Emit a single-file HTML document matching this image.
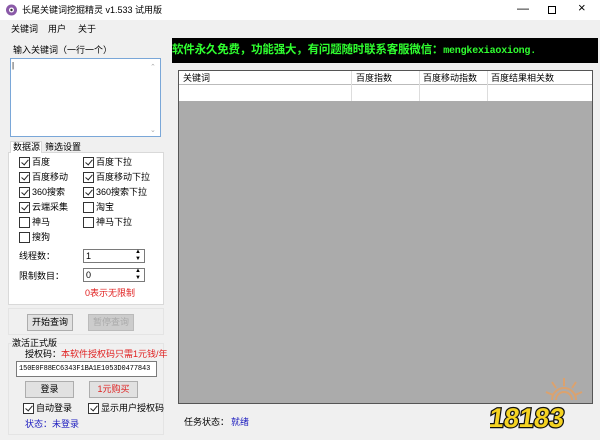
<!DOCTYPE html>
<html><head><meta charset="utf-8"><style>
*{margin:0;padding:0;box-sizing:border-box}
body{width:600px;height:440px;overflow:hidden;background:#f0f0f0;font-family:"Liberation Sans","Noto Sans CJK SC",sans-serif;font-size:9px;color:#000;position:relative}
.a{position:absolute;white-space:nowrap;line-height:11px}
.cb{position:absolute;width:11px;height:11px;border:1px solid #333;background:#fff}
.cb.c::after{content:"";position:absolute;left:3px;top:0px;width:3px;height:6px;border:solid #222;border-width:0 1px 1px 0;transform:rotate(40deg)}
.btn{position:absolute;border:1px solid #adadad;background:#e1e1e1;text-align:center;line-height:14px}
.inp{position:absolute;background:#fff;border:1px solid #7a7a7a}
</style></head><body>
<div style="position:absolute;left:0;top:0;width:600px;height:20px;background:#fff"></div>
<svg style="position:absolute;left:5px;top:3px" width="13" height="13"><circle cx="6.5" cy="7" r="5.5" fill="#8a5aa8"/><circle cx="6.5" cy="7" r="2.5" fill="#fff"/><circle cx="6.5" cy="7" r="1.2" fill="#333"/></svg>
<div class="a" style="left:22px;top:5px;font-size:9px">长尾关键词挖掘精灵 v1.533 试用版</div>
<div class="a" style="left:517px;top:3px;font-size:12px">—</div>
<div style="position:absolute;left:548px;top:6px;width:8px;height:8px;border:1px solid #000"></div>
<div class="a" style="left:578px;top:2px;font-size:13px">×</div>
<div class="a" style="left:11px;top:24px">关键词</div>
<div class="a" style="left:48px;top:24px">用户</div>
<div class="a" style="left:78px;top:24px">关于</div>

<div class="a" style="left:13px;top:45px">输入关键词（一行一个）</div>
<div style="position:absolute;left:10px;top:58px;width:151px;height:79px;border:1px solid #7aa7d8;background:#fff"></div>
<div class="a" style="left:12px;top:60px;font-size:8px">|</div>
<div class="a" style="left:150px;top:62px;color:#aaa;font-size:7px">⌃</div>
<div class="a" style="left:150px;top:125px;color:#aaa;font-size:7px">⌄</div>

<div style="position:absolute;left:8px;top:152px;width:156px;height:153px;border:1px solid #d9d9d9;background:#fff"></div>
<div style="position:absolute;left:10px;top:141px;width:32px;height:12px;background:#fff;border:1px solid #d9d9d9;border-bottom:none"></div>
<div class="a" style="left:13px;top:142px">数据源</div>
<div class="a" style="left:45px;top:142px">筛选设置</div>

<div class="cb c" style="left:19px;top:157px"></div><div class="a" style="left:32px;top:157px">百度</div>
<div class="cb c" style="left:83px;top:157px"></div><div class="a" style="left:96px;top:157px">百度下拉</div>
<div class="cb c" style="left:19px;top:172px"></div><div class="a" style="left:32px;top:172px">百度移动</div>
<div class="cb c" style="left:83px;top:172px"></div><div class="a" style="left:96px;top:172px">百度移动下拉</div>
<div class="cb c" style="left:19px;top:187px"></div><div class="a" style="left:32px;top:187px">360搜索</div>
<div class="cb c" style="left:83px;top:187px"></div><div class="a" style="left:96px;top:187px">360搜索下拉</div>
<div class="cb c" style="left:19px;top:202px"></div><div class="a" style="left:32px;top:202px">云端采集</div>
<div class="cb" style="left:83px;top:202px"></div><div class="a" style="left:96px;top:202px">淘宝</div>
<div class="cb" style="left:19px;top:217px"></div><div class="a" style="left:32px;top:217px">神马</div>
<div class="cb" style="left:83px;top:217px"></div><div class="a" style="left:96px;top:217px">神马下拉</div>
<div class="cb" style="left:19px;top:232px"></div><div class="a" style="left:32px;top:232px">搜狗</div>

<div class="a" style="left:19px;top:251px">线程数：</div>
<div class="inp" style="left:83px;top:249px;width:62px;height:14px"></div>
<div class="a" style="left:86px;top:251px">1</div>
<div class="a" style="left:135px;top:249px;font-size:6px;line-height:7px">▲<br>▼</div>
<div class="a" style="left:19px;top:271px">限制数目：</div>
<div class="inp" style="left:83px;top:268px;width:62px;height:14px"></div>
<div class="a" style="left:86px;top:270px">0</div>
<div class="a" style="left:135px;top:268px;font-size:6px;line-height:7px">▲<br>▼</div>
<div class="a" style="left:85px;top:288px;color:#e02020">0表示无限制</div>

<div style="position:absolute;left:8px;top:308px;width:156px;height:27px;border:1px solid #e4e4e4"></div>
<div class="btn" style="left:27px;top:314px;width:46px;height:17px;line-height:15px">开始查询</div>
<div class="btn" style="left:88px;top:314px;width:46px;height:17px;line-height:15px;color:#aaa;background:#ccc;border-color:#bbb">暂停查询</div>
<div style="position:absolute;left:8px;top:343px;width:156px;height:92px;border:1px solid #e4e4e4"></div>
<div class="a" style="left:12px;top:338px;background:#f0f0f0">激活正式版</div>
<div class="a" style="left:25px;top:349px">授权码：<span style="color:#e02020">本软件授权码只需1元钱/年</span></div>
<div class="inp" style="left:16px;top:361px;width:141px;height:16px"></div>
<div class="a" style="left:19px;top:364px;font-size:7px;font-family:'Liberation Mono',monospace;letter-spacing:-0.1px">150E0F88EC6343F1BA1E1053D0477843</div>
<div class="btn" style="left:25px;top:381px;width:49px;height:17px;line-height:15px">登录</div>
<div class="btn" style="left:89px;top:381px;width:49px;height:17px;line-height:15px;color:#e02020">1元购买</div>
<div class="cb c" style="left:23px;top:403px"></div><div class="a" style="left:36px;top:403px">自动登录</div>
<div class="cb c" style="left:88px;top:403px"></div><div class="a" style="left:101px;top:403px">显示用户授权码</div>
<div class="a" style="left:25px;top:419px;color:#2020c0">状态：未登录</div>

<div style="position:absolute;left:172px;top:38px;width:426px;height:25px;background:#000"></div>
<div class="a" style="left:172px;top:44px;color:#30ff30;font-size:11.5px;line-height:13px;font-weight:bold;letter-spacing:-0.2px">软件永久免费，功能强大，有问题随时联系客服微信：<span style="font-family:'Liberation Mono',monospace;font-size:10px">mengkexiaoxiong.</span></div>

<div style="position:absolute;left:178px;top:70px;width:415px;height:334px;background:#ababab;border:1px solid #555"></div>
<div style="position:absolute;left:179px;top:71px;width:413px;height:30px;background:#fff"></div>
<div style="position:absolute;left:179px;top:84px;width:413px;height:1px;background:#bbb"></div>
<div style="position:absolute;left:351px;top:71px;width:1px;height:30px;background:#ddd"></div>
<div style="position:absolute;left:419px;top:71px;width:1px;height:30px;background:#ddd"></div>
<div style="position:absolute;left:487px;top:71px;width:1px;height:30px;background:#ddd"></div>
<div class="a" style="left:183px;top:73px">关键词</div>
<div class="a" style="left:356px;top:73px">百度指数</div>
<div class="a" style="left:423px;top:73px">百度移动指数</div>
<div class="a" style="left:491px;top:73px">百度结果相关数</div>

<div class="a" style="left:184px;top:417px">任务状态：</div>
<div class="a" style="left:231px;top:417px;color:#2020c0">就绪</div>

<svg style="position:absolute;left:490px;top:370px" width="100" height="66">
<g stroke="#e8a060" stroke-width="2" fill="none" opacity="0.8"><path d="M62 30 a12 12 0 0 1 24 0"/><path d="M66 30 a8 8 0 0 1 16 0"/><path d="M74 8 v8 M62 12 l4 6 M86 12 l-4 6 M56 22 l7 3 M92 22 l-7 3"/></g>
<text x="6" y="57" font-family="Liberation Sans" font-weight="bold" font-size="27" fill="#f5d321" stroke="#111" stroke-width="2.5" paint-order="stroke" transform="skewX(-8)">18183</text>
</svg>
</body></html>
